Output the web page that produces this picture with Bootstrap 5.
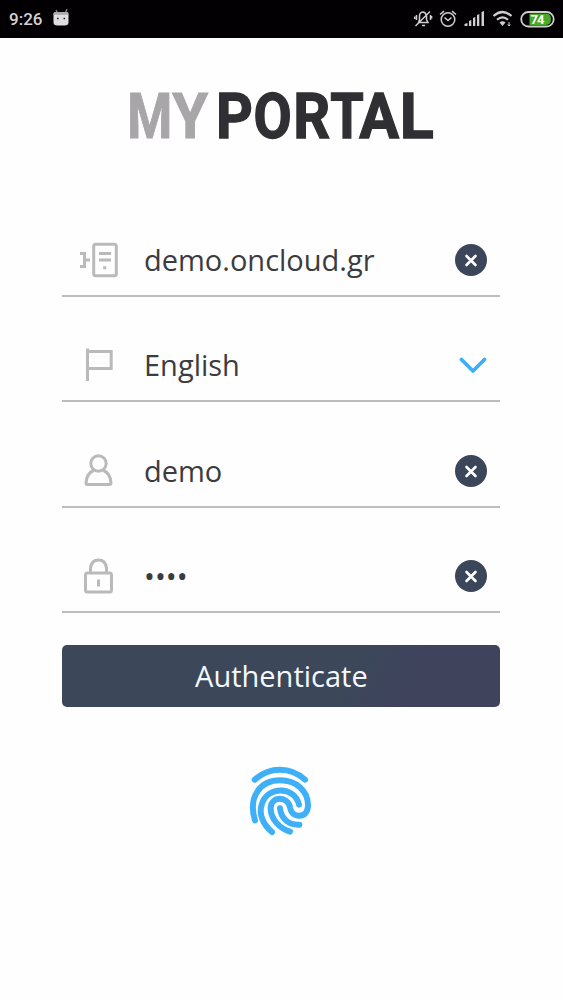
<!DOCTYPE html>
<html lang="en">
<head>
<meta charset="utf-8">
<meta name="viewport" content="width=device-width, initial-scale=1">
<title>My Portal</title>
<link rel="stylesheet" href="https://cdn.jsdelivr.net/npm/bootstrap@5.3.0/dist/css/bootstrap.min.css">
<style>
  body { font-family: "Open Sans", sans-serif; background: #fefefe; color: #3c3c3e; min-height: 1000px; overflow: hidden; }
  svg { display: block; flex: none; }
  .statusbar { height: 38px; background: #020003; color: #d2d2d2; font: 500 17px Roboto, sans-serif; padding: 0 8px 0 9px; }
  .brand-logo { margin: 32px 0 0 120px; overflow: visible; }
  .login { margin: 31.600px 62.600px 0 62.400px; }
  .field { height: 105.4px; padding: 33.500px 13px 0 16.600px; border-bottom: 2px solid #bdbdbd; }
  .field-icon { width: 65px; }
  .field-text { font-size: 29px; line-height: 68px; height: 68px; }
  .clear { width: 32px; height: 32px; background: #3c465a; }
  .auth { height: 62.500px; margin-top: 31.500px; border-radius: 5px; background: linear-gradient(120deg, #3c475a 65%, #3f435c 80%); color: #f4f9ff; font-size: 29px; line-height: 1; }
  .auth:hover { color: #fff; }
</style>
</head>
<body>
<header class="statusbar d-flex align-items-center">
  <span>9:26</span>
  <svg class="ms-2" width="24" height="38" viewBox="0 0 24 38"><path d="M6 10l2 4M17 9l-2 5" stroke="#888" stroke-width="1.3"/><path d="M3.500 14q0-2 2-2h11q2 0 2 2v8.500q0 3-4 3h-7q-4 0-4-3z" fill="#dedede"/><path d="M3.500 14q0-2 2-2h11q2 0 2 2v.8h-15z" fill="#aaa"/><path d="M7 18.500h1.600M13.500 18.500h1.600" stroke="#222" stroke-width="1.600"/></svg>
  <svg class="ms-auto" width="149" height="38" viewBox="406 0 149 38" fill="none" stroke="#cfcfcf" stroke-width="1.500">
    <path d="M418.500 22.500h9.500l-1.500-3v-3.500q-.5-3.500-3.500-4-3.500.5-3.500 4v3.500zM422 25.500h3M416.500 15v5M430.500 15v5M414.800 16.500v2.500M431.600 16v2.500M430 11.500L415.500 26"/>
    <circle cx="448" cy="19.500" r="6.800"/><path d="M444.500 17.500l3.500 3 3.500-3M440 14.500l4-3.300M456 14.500l-4-3.300"/>
    <g fill="#cfcfcf" stroke="none"><path d="M464.500 26v-2l3-1v3zM469 26v-5l2.300-1v6zM473 26v-8l2.300-1v9zM477 26v-11l2.300-1v12zM481.500 26v-14l2.500-1v15z"/><path d="M499.500 22.500q3-2.300 6 0L502.500 26z"/></g>
    <path d="M493.500 16q9-8 18 0M497 19.800q5.500-5 11 0" stroke-width="2.200"/><path d="M509 22v4m-1.300-1.500l1.300 1.500 1.200-1.500" stroke-width="1"/>
    <rect x="521.200" y="12" width="32.500" height="14.500" rx="7.200" stroke-width="1.800"/>
    <path d="M529.500 13.500h16.500q5 0 5 5.700t-5 5.700h-16.500z" fill="#49a925" stroke="none"/>
    <text x="530.500" y="23.800" fill="#fff" stroke="none" font-family="Roboto" font-size="13" font-weight="700" textLength="14">74</text>
  </svg>
</header>
<main>
  <svg class="brand-logo" width="320" height="90" viewBox="120 70 320 90" font-family="Roboto, sans-serif" font-size="63" font-weight="700" role="img" aria-label="My Portal">
    <text y="137.500" fill="#a8a6a8" stroke="#a8a6a8"><tspan x="127.300" textLength="45" lengthAdjust="spacingAndGlyphs">M</tspan><tspan x="172.300" textLength="35.800" lengthAdjust="spacingAndGlyphs">Y</tspan></text>
    <text y="137.500" fill="#302f33" stroke="#302f33" stroke-width="1.300"><tspan x="216" textLength="36.900" lengthAdjust="spacingAndGlyphs">P</tspan><tspan x="253.400" textLength="38.200" lengthAdjust="spacingAndGlyphs">O</tspan><tspan x="293.200" textLength="37" lengthAdjust="spacingAndGlyphs">R</tspan><tspan x="330.300" textLength="33.500" lengthAdjust="spacingAndGlyphs">T</tspan><tspan x="359.200" textLength="39.800" lengthAdjust="spacingAndGlyphs">A</tspan><tspan x="399.800" textLength="34" lengthAdjust="spacingAndGlyphs">L</tspan></text>
  </svg>
  <form class="login">
    <div class="field d-flex align-items-center">
      <div class="field-icon"><svg width="40" height="36" viewBox="79 242 40 36" fill="none" stroke="#bababa" stroke-width="3"><rect x="93.700" y="244.300" width="22.600" height="31.400" rx="2"/><path d="M99 253.500h12M99 260h12M103.200 267.700h3M80 253.500h4.500v13H80M84.500 260H90"/></svg></div>
      <span class="field-text flex-grow-1">demo.oncloud.gr</span>
      <span class="clear rounded-circle"><svg width="32" height="32" viewBox="0 0 32 32" stroke="#fff" stroke-width="2.600" stroke-linecap="round"><path d="M11.500 12l9 9M20.500 12l-9 9"/></svg></span>
    </div>
    <div class="field d-flex align-items-center">
      <div class="field-icon"><svg width="40" height="36" viewBox="79 348 40 36" fill="none" stroke="#bababa" stroke-width="3"><path d="M87.500 349.500v32.500M87.500 352.500h23.700v17H87.500"/></svg></div>
      <span class="field-text flex-grow-1">English</span>
      <svg width="28" height="32" viewBox="459 350 28 32" fill="none" stroke="#40aef0" stroke-width="3.800" stroke-linecap="round" stroke-linejoin="round"><path d="M461.500 360.500l11.500 11.500 11.500-11.500"/></svg>
    </div>
    <div class="field d-flex align-items-center">
      <div class="field-icon"><svg width="40" height="36" viewBox="79 453 40 36" fill="none" stroke="#bababa" stroke-width="3"><circle cx="98.500" cy="463.500" r="7.700"/><path d="M93.500 470.500q-7 3-7.500 12.500 0 1.500 1.500 1.500h22q1.500 0 1.500-1.500-.5-9.500-7.500-12.500" stroke-linejoin="round"/></svg></div>
      <span class="field-text flex-grow-1">demo</span>
      <span class="clear rounded-circle"><svg width="32" height="32" viewBox="0 0 32 32" stroke="#fff" stroke-width="2.600" stroke-linecap="round"><path d="M11.500 12l9 9M20.500 12l-9 9"/></svg></span>
    </div>
    <div class="field d-flex align-items-center">
      <div class="field-icon"><svg width="40" height="36" viewBox="79 558 40 36" fill="none" stroke="#bababa" stroke-width="3"><rect x="85.500" y="573" width="26" height="19" rx="2"/><path d="M90.500 573v-5q1-8 8-8t8 8v5M98.500 579.500v7"/></svg></div>
      <span class="field-text flex-grow-1">••••</span>
      <span class="clear rounded-circle"><svg width="32" height="32" viewBox="0 0 32 32" stroke="#fff" stroke-width="2.600" stroke-linecap="round"><path d="M11.500 12l9 9M20.500 12l-9 9"/></svg></span>
    </div>
    <button type="button" class="auth btn border-0 w-100 d-flex align-items-center justify-content-center">Authenticate</button>
  </form>
  <svg class="mx-auto mt-5" width="85" height="90" viewBox="-2 0 255 270" fill="none" stroke="#3fb0f8" stroke-width="18" stroke-linecap="round" stroke-linejoin="round" role="img" aria-label="Fingerprint">
    <path d="M45 74Q78 44 121 44T196 74"/>
    <path d="M46 196C24 124 63 76 121 76C170 76 205 108 205 150C205 171 194 182 179 182C161 182 153 170 151 157C147 124 93 121 93 160C93 193 120 220 151 230"/>
    <path d="M97 231C70 209 57 178 66 149C82 91 166 93 178 149"/>
    <path d="M121 160C124 192 149 211 179 209"/>
  </svg>
</main>
<script src="https://cdn.jsdelivr.net/npm/bootstrap@5.3.0/dist/js/bootstrap.bundle.min.js"></script>
</body>
</html>
